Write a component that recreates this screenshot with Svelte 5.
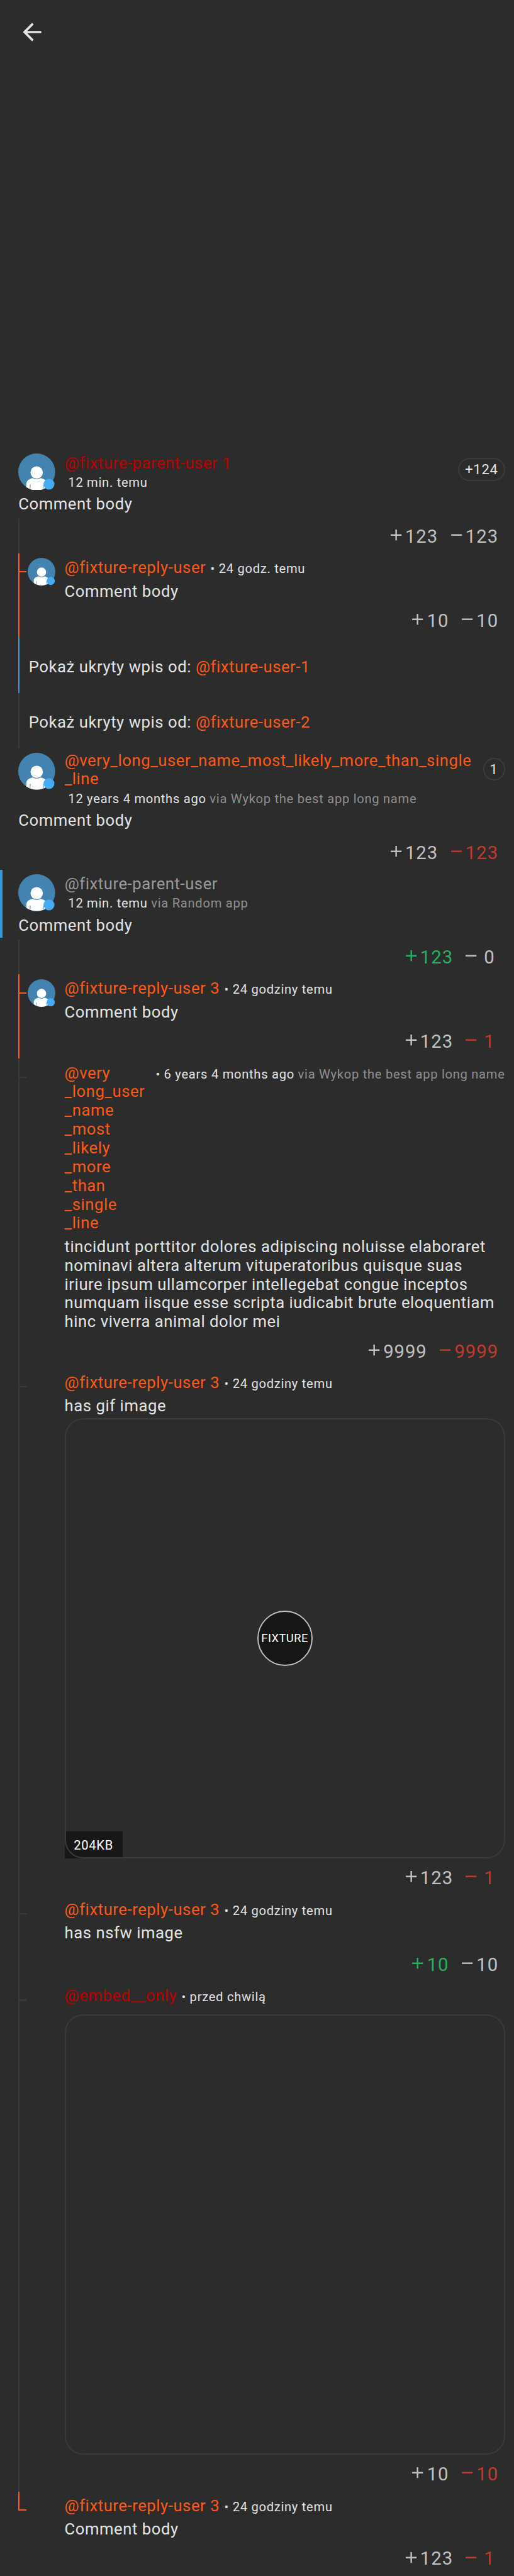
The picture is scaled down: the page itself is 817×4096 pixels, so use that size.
<script>
  const bullet = ' • ';
  const fixture3 = { name: '@fixture-reply-user 3', tone: 'orange', time: bullet + '24 godziny temu' };

  const threads = [
    {
      name: '@fixture-parent-user 1', tone: 'red', time: ' 12 min. temu', badge: '+124',
      body: 'Comment body', plus: '123', minus: '123',
      replies: [
        {
          name: '@fixture-reply-user', tone: 'orange', time: bullet + '24 godz. temu', avatar: true, line: 'op',
          body: 'Comment body', plus: '10', minus: '10'
        },
        { hidden: '@fixture-user-1', line: 'own' },
        { hidden: '@fixture-user-2' }
      ]
    },
    {
      name: '@very_long_user_name_most_likely_more_than_single\n_line', tone: 'orange', wrapped: true,
      time: ' 12 years 4 months ago', app: 'Wykop the best app long name', badge: '1',
      body: 'Comment body', plus: '123', minus: '123', minusTone: 'down', replies: []
    },
    {
      name: '@fixture-parent-user', tone: 'gray', time: ' 12 min. temu', app: 'Random app', own: true,
      body: 'Comment body', plus: '123', plusTone: 'up', minus: '0',
      replies: [
        { ...fixture3, avatar: true, line: 'op', body: 'Comment body', plus: '123', minus: '1', minusTone: 'down' },
        {
          name: '@very\n_long_user\n_name\n_most\n_likely\n_more\n_than\n_single\n_line', tone: 'orange',
          time: bullet + '6 years 4 months ago', app: 'Wykop the best app long name',
          body: 'tincidunt porttitor dolores adipiscing noluisse elaboraret\nnominavi altera alterum vituperatoribus quisque suas\niriure ipsum ullamcorper intellegebat congue inceptos\nnumquam iisque esse scripta iudicabit brute eloquentiam\nhinc viverra animal dolor mei',
          plus: '9999', minus: '9999', minusTone: 'down'
        },
        { ...fixture3, body: 'has gif image', embed: 'gif', plus: '123', minus: '1', minusTone: 'down' },
        { ...fixture3, body: 'has nsfw image', embed: 'none', plus: '10', plusTone: 'up', minus: '10' },
        {
          name: '@embed__only', tone: 'red', time: bullet + 'przed chwilą', embed: 'plain',
          plus: '10', minus: '10', minusTone: 'down'
        },
        { ...fixture3, line: 'op', last: true, body: 'Comment body', plus: '123', minus: '1', minusTone: 'down' }
      ]
    }
  ];
</script>

{#snippet avatar()}
  <svg class="avatar" viewBox="0 0 112 112" aria-hidden="true">
    <clipPath id="round"><circle cx="56" cy="56" r="56" /></clipPath>
    <circle cx="56" cy="56" r="56" fill="#4383af" />
    <g clip-path="url(#round)">
      <path d="M44 75Q56 82 68 75C79 77 87.500 83 87.500 92V112H24.500V92C24.500 83 33 77 44 75Z" fill="#fff" />
      <path d="M35.300 95H37.500L36.700 108H35ZM75 95H77L77.500 108H76Z" fill="#4383af" />
    </g>
    <circle cx="56" cy="57.700" r="18.700" fill="#fff" />
    <circle cx="93.300" cy="93.300" r="16.500" fill="#47abf3" />
  </svg>
{/snippet}

{#snippet votes(item)}
  <footer class="votes">
    <span class="vote {item.plusTone}">
      <svg viewBox="0 0 24 24"><path d="M19 13h-6v6h-2v-6H5v-2h6V5h2v6h6z" fill="currentColor" /></svg>
      <span class="count">{item.plus}</span>
    </span>
    <span class="vote {item.minusTone}">
      <svg viewBox="0 0 24 24"><path d="M19 13H5v-2h14z" fill="currentColor" /></svg>
      <span class="count">{item.minus}</span>
    </span>
  </footer>
{/snippet}

{#snippet time(item)}
  <span class="time">{item.time}{#if item.app}<span class="app">{' via ' + item.app}</span>{/if}</span>
{/snippet}

<div class="screen">
  <header class="toolbar">
    <svg viewBox="0 0 24 24"><path d="M20 11H7.830l5.590-5.590L12 4l-8 8 8 8 1.410-1.410L7.830 13H20z" fill="currentColor" /></svg>
  </header>

  {#each threads as entry}
    <article class="entry" class:own={entry.own}>
      <div class="head">
        {@render avatar()}
        <div class="info" class:wrapped={entry.wrapped}>
          <span class="name {entry.tone}">{entry.name}</span>
          {@render time(entry)}
        </div>
        {#if entry.badge}<span class="badge">{entry.badge}</span>{/if}
      </div>
      <p class="body">{entry.body}</p>
      <div class="foot" class:threaded={entry.replies.length > 0}>{@render votes(entry)}</div>
    </article>

    {#each entry.replies as reply}
      {#if reply.hidden}
        <div class="hidden-row line-{reply.line}">
          <span>Pokaż ukryty wpis od: <span class="orange">{reply.hidden}</span></span>
        </div>
      {:else}
        <article class="reply line-{reply.line}" class:last={reply.last}>
          <div class="gutter">{#if reply.avatar}{@render avatar()}{/if}</div>
          <div class="content">
            <div class="title">
              <span class="name {reply.tone}">{reply.name}</span>
              {@render time(reply)}
            </div>
            {#if reply.body}<p class="body">{reply.body}</p>{/if}
            {#if reply.embed === 'gif'}
              <div class="embed">
                <span class="play">FIXTURE</span>
                <span class="size">204KB</span>
              </div>
            {:else if reply.embed === 'plain'}
              <div class="embed alone"></div>
            {:else if reply.embed === 'none'}
              <div class="spacer"></div>
            {/if}
            {@render votes(reply)}
          </div>
        </article>
      {/if}
    {/each}
  {/each}
</div>

<style>
  :global(html) { font-size: 52.385px; background: #2c2c2c; }
  :global(body) { overflow: hidden; }

  .screen {
    width: 15.6rem;
    height: 78.19rem;
    background: #2c2c2c;
    color: #e3e3e3;
    font-family: Roboto, sans-serif;
    font-size: 0.49rem;
    line-height: 0.57rem;
    letter-spacing: 0.0215em;
  }
  svg { display: block; flex: none; }
  .toolbar { box-sizing: border-box; height: 13.62rem; padding: 0.56rem; color: #e3e3e3; }
  .toolbar svg { width: 0.84rem; height: 0.84rem; }

  .name { white-space: pre-line; }
  .time { font-size: 0.385rem; line-height: 0.48rem; letter-spacing: 0.035em; white-space: pre; flex: none; }
  .app { color: #8f8f8f; }
  .orange { color: #ff5917; }
  .red { color: #bb0000; }
  .gray { color: #999; }
  .body { margin: 0; white-space: pre-line; }

  .entry { position: relative; padding-top: 0.14rem; }
  .entry.own::before {
    content: '';
    position: absolute;
    left: 0;
    top: 0;
    width: 0.07rem;
    height: 2.06rem;
    background: #3498db;
  }
  .head { display: flex; align-items: flex-start; padding: 0 0.28rem 0 0.56rem; }
  .head .avatar { width: 1.12rem; height: 1.12rem; }
  .info {
    flex: 1;
    display: flex;
    flex-direction: column;
    box-sizing: border-box;
    height: 1.12rem;
    margin-left: 0.28rem;
    padding-top: 0.015rem;
  }
  .info.wrapped { height: 1.69rem; margin-top: -0.07rem; }
  .info .time { margin-top: 0.07rem; }
  .badge {
    box-sizing: border-box;
    height: 0.7rem;
    margin-top: 0.14rem;
    padding: 0.08rem 0.17rem 0;
    border: 0.04rem solid #3b3b3b;
    border-radius: 0.35rem;
    font-size: 0.42rem;
    line-height: 0.49rem;
    letter-spacing: 0.0333em;
  }
  .entry .body { margin: 0.15rem 0.28rem 0.15rem 0.56rem; }
  .foot { margin-left: 0.56rem; }
  .foot.threaded { border-left: 0.04rem solid #3a3a3a; }

  .votes {
    display: flex;
    justify-content: flex-end;
    gap: 0.275rem;
    box-sizing: border-box;
    height: 1.05rem;
    padding: 0.205rem 0.48rem 0 0;
    font-size: 0.56rem;
    line-height: 0.66rem;
    letter-spacing: 0.03125em;
    color: #c0c0c0;
  }
  .vote { display: flex; }
  .vote svg { width: 0.56rem; height: 0.56rem; margin-top: 0.005rem; }
  .count { min-width: 0.54rem; text-align: center; }
  .up { color: #27ae60; }
  .down { color: #c0392b; }

  .reply, .hidden-row {
    --line: #3a3a3a;
    position: relative;
    display: flex;
    box-sizing: border-box;
    margin-left: 0.56rem;
    border-left: 0.04rem solid var(--line);
  }
  .line-op { --line: #ff5917; }
  .line-own { --line: #3498db; }
  .hidden-row { height: 1.68rem; padding: 0.6rem 0 0 0.275rem; }
  .reply::before {
    content: '';
    position: absolute;
    left: 0;
    top: 0.54rem;
    width: 0.2rem;
    height: 0.04rem;
    background: var(--line);
  }
  .reply.last { border-left-color: transparent; }
  .reply.last::after {
    content: '';
    position: absolute;
    left: -0.04rem;
    top: 0;
    width: 0.04rem;
    height: 0.58rem;
    background: var(--line);
  }
  .gutter { flex: none; box-sizing: border-box; width: 1.36rem; padding: 0.14rem 0 0 0.24rem; }
  .gutter .avatar { width: 0.84rem; height: 0.84rem; }
  .content { flex: 1; min-width: 0; padding-top: 0.155rem; }
  .title { display: flex; align-items: baseline; }
  .title .time { margin-left: 0.03rem; }
  .title, .content .body, .embed { margin-right: 0.28rem; }
  .title:has(.app) .name { flex: 1; }
  .content .body { margin-top: 0.145rem; margin-bottom: 0.07rem; }
  .embed {
    position: relative;
    height: 13.36rem;
    margin-bottom: 0.07rem;
    display: flex;
    align-items: center;
    justify-content: center;
  }
  .embed::after {
    content: '';
    position: absolute;
    inset: 0;
    border: 0.04rem solid #3a3a3a;
    border-radius: 0.56rem;
  }
  .embed.alone { margin-top: 0.265rem; }
  .spacer { height: 0.07rem; }
  .play {
    box-sizing: border-box;
    width: 1.68rem;
    height: 1.68rem;
    border: 0.04rem solid #bdbdbd;
    border-radius: 50%;
    background: #171717;
    color: #fff;
    display: flex;
    align-items: center;
    justify-content: center;
    font-size: 0.35rem;
    letter-spacing: 0.025em;
  }
  .size {
    position: absolute;
    left: 0;
    bottom: 0;
    padding: 0.21rem 0.28rem 0.15rem;
    background: #171717;
    color: #fff;
    font-size: 0.385rem;
    line-height: 0.45rem;
    letter-spacing: 0.035em;
  }
</style>
